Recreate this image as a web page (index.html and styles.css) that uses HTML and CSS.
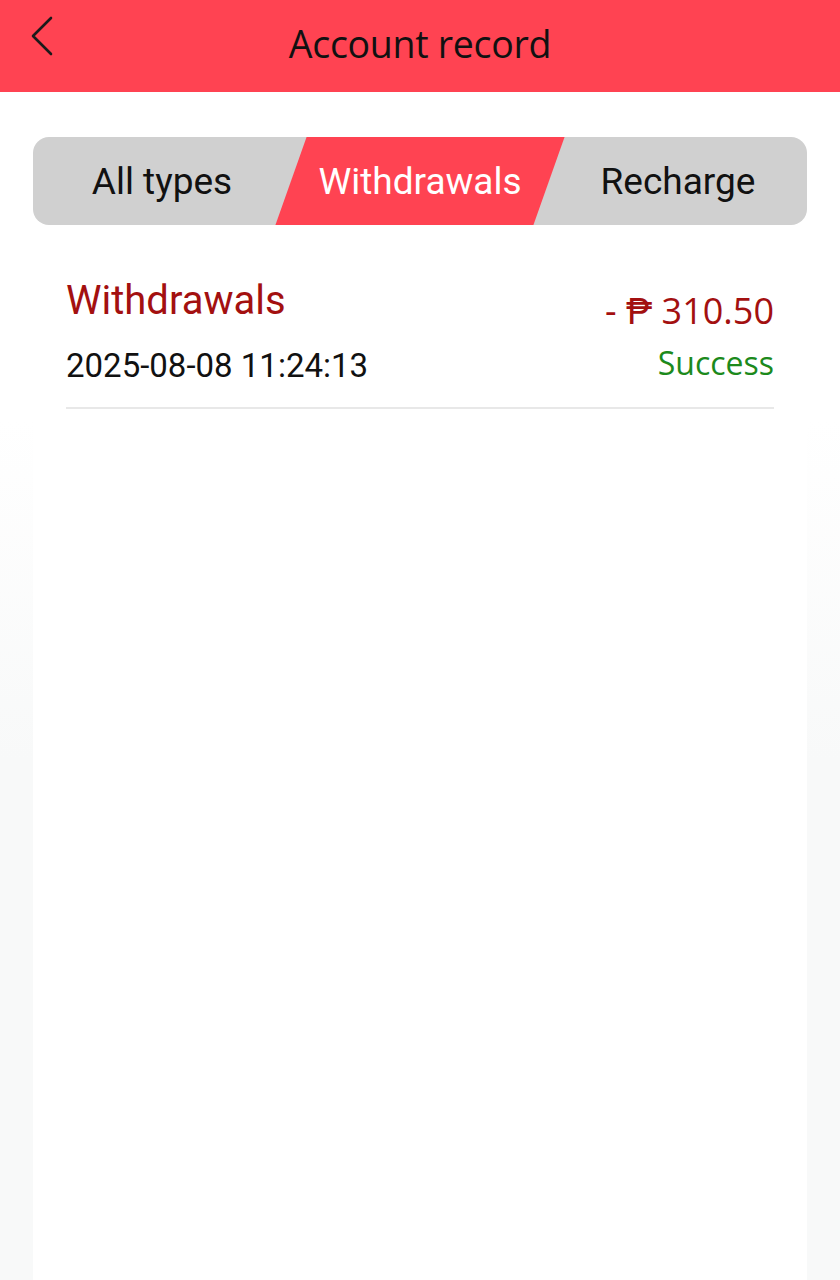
FILE: index.html
```html
<!DOCTYPE html>
<html>
<head>
<meta charset="utf-8">
<link rel="stylesheet" href="styles.css">
</head>
<body>
<div class="page">
  <header class="topbar">
    <span class="back">
      <svg width="28" height="40" viewBox="0 0 28 40"><path d="M23 2 L5 20 L23 38" fill="none" stroke="#1a1a1a" stroke-width="2.6" stroke-linecap="round" stroke-linejoin="round"/></svg>
    </span>
    <h1 class="title">Account record</h1>
  </header>
  <main class="panel">
    <nav class="tabs">
      <div class="tab">All types</div>
      <div class="tab active"><span class="active-bg"></span><span class="tab-label">Withdrawals</span></div>
      <div class="tab">Recharge</div>
    </nav>
    <div class="record">
      <div class="rec-left">
        <div class="rec-type">Withdrawals</div>
        <div class="rec-date">2025-08-08 11:24:13</div>
      </div>
      <div class="rec-right">
        <div class="rec-amount">- ₱ 310.50</div>
        <div class="rec-status">Success</div>
      </div>
    </div>
  </main>
</div>
</body>
</html>
```
FILE: styles.css
```css
* { box-sizing: border-box; }
html, body { margin: 0; padding: 0; }
body {
  background: linear-gradient(to bottom, #ffffff 0, #ffffff 420px, #f8f9f9 760px, #f8f9f9 100%);
  font-family: Roboto, "Liberation Sans", sans-serif;
  width: 840px;
  min-height: 1280px;
}
.page { display: flex; flex-direction: column; min-height: 1280px; }
.topbar {
  height: 92px;
  background: #ff4352;
  display: flex;
  align-items: center;
  justify-content: center;
  position: relative;
}
.back {
  position: absolute;
  left: 28px;
  top: 16px;
  display: flex;
}
.title {
  margin: 0 0 4px;
  font-family: "Open Sans", Roboto, sans-serif;
  font-weight: 400;
  font-size: 37.5px;
  line-height: 48px;
  color: #111;
  letter-spacing: -0.3px;
}
.panel {
  flex: 1;
  margin: 0 33px;
  background: #fff;
  padding-top: 45px;
}
.tabs {
  height: 88px;
  background: #d0d0d0;
  border-radius: 16px;
  display: flex;
  overflow: hidden;
}
.tab {
  flex: 1;
  display: flex;
  align-items: center;
  justify-content: center;
  font-size: 37px;
  color: #111;
  position: relative;
}
.tab.active { color: #fff; }
.active-bg {
  position: absolute;
  top: 0; bottom: 0;
  left: 0;
  right: 0;
  background: #ff4352;
  transform: skewX(-19.5deg);
}
.tab-label { position: relative; }
.record {
  margin: 52px 33px 0;
  padding-bottom: 21px;
  border-bottom: 2px solid #e8e8e8;
  display: flex;
  justify-content: space-between;
}
.rec-type {
  font-size: 40px;
  color: #a31010;
  line-height: 48px;
}
.rec-date {
  font-size: 33px;
  color: #111;
  line-height: 40px;
  margin-top: 21px;
}
.rec-right { text-align: right; }
.rec-amount {
  font-family: "Open Sans", Roboto, sans-serif;
  font-size: 36px;
  color: #a31010;
  line-height: 44px;
  margin-top: 12px;
}
.rec-status {
  font-family: "Open Sans", Roboto, sans-serif;
  font-size: 32px;
  color: #1c8a1c;
  line-height: 40px;
  margin-top: 10px;
}
```
